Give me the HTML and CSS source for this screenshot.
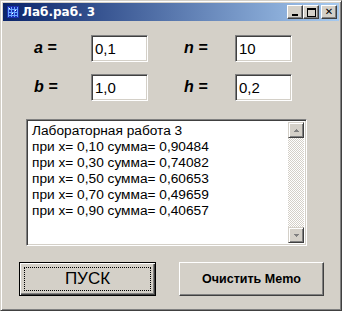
FILE: index.html
```html
<!DOCTYPE html>
<html lang="ru">
<head>
  <meta charset="UTF-8">
  <title>Лаб.раб. 3</title>
  <link rel="stylesheet" href="styles.css">
</head>
<body>
  <div class="window">
    <div class="titlebar">
      <svg class="app-icon" width="16" height="16" viewBox="0 0 16 16">
        <rect x="2" y="2" width="12" height="12" fill="#1a2fb0"/>
        <g fill="#6aa8ff">
          <rect x="3" y="3" width="1" height="10"/>
          <rect x="6" y="3" width="1" height="10"/>
          <rect x="9" y="3" width="1" height="10"/>
          <rect x="12" y="3" width="1" height="10"/>
          <rect x="3" y="5" width="10" height="1"/>
          <rect x="3" y="8" width="10" height="1"/>
          <rect x="3" y="11" width="10" height="1"/>
        </g>
        <g fill="#fff">
          <rect x="4" y="4" width="1" height="1"/>
          <rect x="10" y="6" width="1" height="1"/>
          <rect x="7" y="9" width="1" height="1"/>
        </g>
      </svg>
      <span class="title">Лаб.раб. 3</span>
      <div class="caption-btns">
        <button class="cap-btn"><span class="glyph-min"></span></button>
        <button class="cap-btn"><span class="glyph-max"></span></button>
        <button class="cap-btn close">&#x2715;</button>
      </div>
    </div>

    <div class="client">
      <div class="params">
        <div class="param-row">
          <span class="var-label">a =</span>
          <div class="edit">0,1</div>
          <span class="var-label second">n =</span>
          <div class="edit">10</div>
        </div>
        <div class="param-row">
          <span class="var-label">b =</span>
          <div class="edit">1,0</div>
          <span class="var-label second">h =</span>
          <div class="edit">0,2</div>
        </div>
      </div>

      <div class="memo">
        <div class="memo-text">
          <div>Лабораторная работа 3</div>
          <div>при x= 0,10 сумма= 0,90484</div>
          <div>при x= 0,30 сумма= 0,74082</div>
          <div>при x= 0,50 сумма= 0,60653</div>
          <div>при x= 0,70 сумма= 0,49659</div>
          <div>при x= 0,90 сумма= 0,40657</div>
        </div>
        <div class="scrollbar">
          <div class="scroll-btn">
            <svg width="7" height="5" viewBox="0 0 7 5"><path d="M3 1h1v1h1v1h1v1H1V3h1V2h1z" fill="#808080"/></svg>
          </div>
          <div class="scroll-track"></div>
          <div class="scroll-btn">
            <svg width="7" height="5" viewBox="0 0 7 5"><path d="M1 1h5v1H5v1H4v1H3V3H2V2H1z" fill="#808080"/></svg>
          </div>
        </div>
      </div>

      <div class="actions">
        <button class="btn default"><span class="focus">ПУСК</span></button>
        <button class="btn clear">Очистить Memo</button>
      </div>
    </div>
  </div>
</body>
</html>
```

FILE: styles.css
```css
* {
  margin: 0;
  padding: 0;
  box-sizing: border-box;
}

body {
  background: #d4d0c8;
  font-family: "Liberation Sans", Arial, sans-serif;
}

.window {
  width: 342px;
  height: 311px;
  background: #d4d0c8;
  border: 1px solid;
  border-color: #d4d0c8 #404040 #404040 #d4d0c8;
  box-shadow: inset 1px 1px #fff, inset -1px -1px #808080;
  padding: 2px;
  display: flex;
  flex-direction: column;
}

.titlebar {
  height: 18px;
  background: linear-gradient(to right, #0a246a, #a6caf0);
  display: flex;
  align-items: center;
  padding-left: 2px;
  padding-right: 2px;
}

.app-icon {
  flex: none;
  margin-right: 1px;
}

.title {
  color: #fff;
  font-weight: 700;
  font-size: 12px;
  font-family: "DejaVu Sans", sans-serif;
}

.caption-btns {
  margin-left: auto;
  display: flex;
}

.cap-btn {
  width: 16px;
  height: 14px;
  background: #d4d0c8;
  border: 1px solid;
  border-color: #fff #404040 #404040 #fff;
  box-shadow: inset -1px -1px #808080;
  display: flex;
  align-items: center;
  justify-content: center;
  font-size: 10px;
  font-weight: 700;
  color: #000;
  font-family: "DejaVu Sans", sans-serif;
  line-height: 1;
}

.cap-btn.close {
  margin-left: 2px;
}

.glyph-min {
  width: 6px;
  height: 2px;
  background: #000;
  margin-top: 6px;
  margin-right: 1px;
}

.glyph-max {
  width: 9px;
  height: 9px;
  border: 1px solid #000;
  border-top-width: 2px;
}

.client {
  flex: 1;
  padding: 14px 13px 0 23px;
}

.params {
  display: flex;
  flex-direction: column;
  gap: 12px;
  padding-left: 8px;
}

.param-row {
  display: flex;
  align-items: center;
}

.var-label {
  width: 57px;
  font-size: 16px;
  font-weight: 700;
  font-style: italic;
  padding-bottom: 2px;
}

.var-label.second {
  width: 51px;
  margin-left: 36px;
}

.edit {
  width: 57px;
  height: 27px;
  background: #fff;
  border: 1px solid;
  border-color: #808080 #fff #fff #808080;
  box-shadow: inset 1px 1px #404040, inset -1px -1px #d4d0c8;
  font-size: 15px;
  padding: 4px 0 0 3px;
  color: #000;
}

.memo {
  margin-top: 18px;
  width: 281px;
  height: 127px;
  background: #fff;
  border: 1px solid;
  border-color: #808080 #fff #fff #808080;
  box-shadow: inset 1px 1px #404040, inset -1px -1px #d4d0c8;
  padding: 2px;
  display: flex;
}

.memo-text {
  flex: 1;
  padding: 1px 0 0 3px;
  font-size: 13.7px;
  line-height: 16px;
  color: #000;
}

.scrollbar {
  width: 16px;
  display: flex;
  flex-direction: column;
}

.scroll-btn {
  height: 16px;
  background: #d4d0c8;
  border: 1px solid;
  border-color: #d4d0c8 #404040 #404040 #d4d0c8;
  box-shadow: inset 1px 1px #fff, inset -1px -1px #808080;
  display: flex;
  align-items: center;
  justify-content: center;
}

.scroll-track {
  flex: 1;
  background: repeating-conic-gradient(#fff 0 25%, #d4d0c8 0 50%) 0 0 / 2px 2px;
}

.actions {
  margin-top: 16px;
  margin-left: -7px;
  display: flex;
  gap: 23px;
}

.btn {
  height: 34px;
  background: #d4d0c8;
  color: #000;
  font-family: "Liberation Sans", Arial, sans-serif;
}

.btn.default {
  width: 137px;
  border: 1px solid #000;
  box-shadow: inset 1px 1px #fff, inset -1px -1px #404040, inset -2px -2px #808080;
  padding: 4px;
  font-size: 17px;
}

.btn.default .focus {
  display: flex;
  align-items: center;
  justify-content: center;
  height: 100%;
  border: 1px dotted #000;
}

.btn.clear {
  width: 145px;
  border: 1px solid;
  border-color: #fff #404040 #404040 #fff;
  box-shadow: inset -1px -1px #808080;
  font-size: 12.5px;
  font-weight: 700;
}
```
